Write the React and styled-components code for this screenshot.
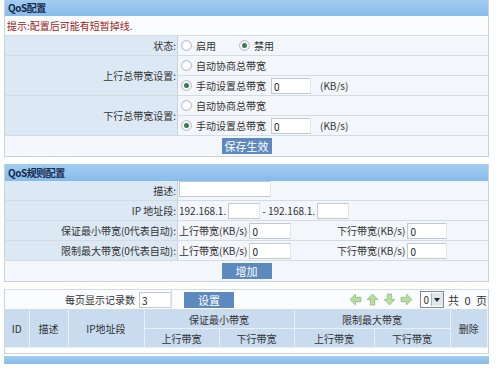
import React from "react";
import styled, { createGlobalStyle } from "styled-components";

const Global = createGlobalStyle`
	body {
		margin: 0;
		background: #ffffff;
		font-family: "Noto Sans CJK SC", "Liberation Sans", sans-serif;
		font-size: 10px;
		color: #333;
	}
`;

const Page = styled.div`
	width: 485px;
	padding: 0 11px 0 4px;
	display: flex;
	flex-direction: column;
`;

// panel with title bar
const Panel = styled.div`
	border: 1px solid #c9d3dd;
	border-top: none;
	background: #fff;
	margin-bottom: ${(p) => p.gap || 0}px;
`;

const TitleBar = styled.div`
	height: ${(p) => p.h || 16}px;
	line-height: ${(p) => p.h || 16}px;
	background: linear-gradient(#a3cdf0, #86bbea);
	padding-left: 3px;
	font-weight: bold;
	font-size: 10px;
	color: #14284a;
	letter-spacing: -0.5px;
`;

const Hint = styled.div`
	height: 19px;
	line-height: 19px;
	padding-left: 2px;
	color: #9b1c22;
	border-bottom: 1px solid #d3dbe3;
	background: #fbfcfe;
`;

const Table = styled.table`
	width: 100%;
	border-collapse: collapse;
	table-layout: fixed;
	td {
		padding: 0;
		height: 19px;
		border-bottom: 1px solid #d3dbe3;
		white-space: nowrap;
	}
`;

const Label = styled.td`
	width: 171px;
	background: #dce8f4;
	text-align: right;
	padding-right: 1px !important;
	border-right: 1px solid #c9d3dd;
`;

const Value = styled.td`
	background: #f3f6fa;
	padding-left: 1px !important;
`;

const Center = styled.td`
	background: #f3f6fa;
	text-align: center;
	height: 20px !important;
	border-bottom: none !important;
`;

const Inline = styled.div`
	display: flex;
	align-items: center;
	gap: ${(p) => p.gap || 4}px;
`;

const RadioDot = styled.span`
	width: 9px;
	height: 9px;
	border-radius: 50%;
	border: 1px solid #b8bec6;
	background: radial-gradient(circle, #fff 30%, #e4e8ec 100%);
	position: relative;
	margin: 0 4px 0 2px;
	&::after {
		content: "";
		display: ${(p) => (p.on ? "block" : "none")};
		position: absolute;
		left: 2px;
		top: 2px;
		width: 5px;
		height: 5px;
		border-radius: 50%;
		background: #3f7a52;
	}
`;

const RadioItem = styled.span`
	display: inline-flex;
	align-items: center;
	margin-right: ${(p) => p.mr || 0}px;
`;

const Field = styled.span`
	display: inline-block;
	width: ${(p) => p.w}px;
	height: 16px;
	line-height: 16px;
	border: 1px solid #c3c8ce;
	border-right-color: #e4e7ea;
	background: #fff;
	padding-left: 2px;
	box-sizing: border-box;
	font-size: 10px;
	color: #222;
`;

const Button = styled.span`
	display: inline-block;
	width: ${(p) => p.w || 50}px;
	height: 16px;
	line-height: 16px;
	background: #5d89bf;
	color: #fff;
	text-align: center;
	font-size: 11px;
`;

const Radio = ({ on, children, mr }) => (
	<RadioItem mr={mr}>
		<RadioDot on={on ? 1 : 0} />
		{children}
	</RadioItem>
);

const Half = styled.span`
	display: inline-flex;
	align-items: center;
	width: ${(p) => p.w}px;
	gap: 2px;
`;

// pager row
const PagerRow = styled.div`
	display: flex;
	align-items: center;
	height: 19px;
	border-top: 1px solid #d3dbe3;
	border-bottom: 1px solid #d3dbe3;
	background: #fbfcfe;
`;

const PagerLeft = styled.div`
	width: 166px;
	display: flex;
	align-items: center;
	justify-content: flex-end;
	gap: 4px;
	border-right: 1px solid #d3dbe3;
	height: 100%;
`;

const PagerBtnCell = styled.div`
	padding-left: 12px;
	display: flex;
	align-items: center;
`;

const PagerRight = styled.div`
	margin-left: auto;
	display: flex;
	align-items: center;
	gap: 4px;
	padding-right: 1px;
	font-size: 11px;
	word-spacing: 3px;
`;

const Arrows = styled.span`
	display: inline-flex;
	align-items: center;
	gap: 4px;
	margin-right: 3px;
`;

const Select = styled.span`
	display: inline-flex;
	align-items: center;
	height: 15px;
	border: 1px solid #7f8a96;
	background: #fff;
	font-size: 10px;
	span:first-child {
		padding: 0 2px;
	}
`;

const SelBtn = styled.span`
	width: 11px;
	height: 13px;
	background: #dfe6ee;
	border-left: 1px solid #aab4be;
	display: flex;
	align-items: center;
	justify-content: center;
	&::after {
		content: "";
		border: 3px solid transparent;
		border-top: 4px solid #222;
		margin-top: 3px;
	}
`;

const Head = styled.table`
	width: 100%;
	border-collapse: collapse;
	table-layout: fixed;
	th {
		font-weight: normal;
		background: #c8dbef;
		border: 1px solid #e8f0f8;
		border-top: none;
		height: 18px;
		padding: 0;
		color: #333;
	}
	tr:first-child th:first-child {
		border-left: none;
	}
`;

const Spacer = styled.div`
	height: 5px;
	background: #fff;
`;

const BottomBar = styled.div`
	height: 8px;
	background: linear-gradient(#a3cdf0, #86bbea);
	margin-top: 2px;
`;

const Arrow = ({ dir }) => {
	const rot = { left: 180, up: -90, down: 90, right: 0 }[dir];
	return (
		<svg width="13" height="13" viewBox="0 0 12 12">
			<g transform={`rotate(${rot} 6 6)`}>
				<path
					d="M1 4 H6 V1 L11 6 L6 11 V8 H1 Z"
					fill="#b9dca6"
					stroke="#8fbf7d"
					strokeWidth="0.8"
				/>
			</g>
		</svg>
	);
};

const Manual = () => (
	<Inline gap={0}>
		<Radio on>手动设置总带宽</Radio>
		<Field w={40} style={{ marginLeft: 1 }}>
			0
		</Field>
		<span style={{ marginLeft: 5 }}>(KB/s)</span>
	</Inline>
);

const Bandwidth = () => (
	<Inline gap={0}>
		<Half w={154}>
			上行带宽(KB/s)
			<Field w={42}>0</Field>
		</Half>
		<Half w={120}>
			下行带宽(KB/s)
			<Field w={40}>0</Field>
		</Half>
	</Inline>
);

export default function App() {
	return (
		<Page>
			<Global />
			<Panel gap={7}>
				<TitleBar>QoS配置</TitleBar>
				<Hint>提示:配置后可能有短暂掉线.</Hint>
				<Table>
					<tbody>
						<tr>
							<Label>状态:</Label>
							<Value>
								<Inline gap={0}>
									<Radio mr={17}>启用</Radio>
									<Radio on>禁用</Radio>
								</Inline>
							</Value>
						</tr>
						<tr>
							<Label rowSpan={2}>上行总带宽设置:</Label>
							<Value>
								<Radio>自动协商总带宽</Radio>
							</Value>
						</tr>
						<tr>
							<Value>
								<Manual />
							</Value>
						</tr>
						<tr>
							<Label rowSpan={2}>下行总带宽设置:</Label>
							<Value>
								<Radio>自动协商总带宽</Radio>
							</Value>
						</tr>
						<tr>
							<Value>
								<Manual />
							</Value>
						</tr>
						<tr>
							<Center colSpan={2}>
								<Button>保存生效</Button>
							</Center>
						</tr>
					</tbody>
				</Table>
			</Panel>

			<Panel gap={7}>
				<TitleBar h={17}>QoS规则配置</TitleBar>
				<Table>
					<tbody>
						<tr>
							<Label>描述:</Label>
							<Value>
								<Field w={92} />
							</Value>
						</tr>
						<tr>
							<Label>IP 地址段:</Label>
							<Value>
								<Inline gap={2}>
									<span>192.168.1.</span>
									<Field w={32} />
									<span>- 192.168.1.</span>
									<Field w={32} />
								</Inline>
							</Value>
						</tr>
						<tr>
							<Label>保证最小带宽(0代表自动):</Label>
							<Value>
								<Bandwidth />
							</Value>
						</tr>
						<tr>
							<Label>限制最大带宽(0代表自动):</Label>
							<Value>
								<Bandwidth />
							</Value>
						</tr>
						<tr>
							<Center colSpan={2}>
								<Button>增加</Button>
							</Center>
						</tr>
					</tbody>
				</Table>
			</Panel>

			<Panel>
				<PagerRow>
					<PagerLeft>
						每页显示记录数
						<Field w={32}>3</Field>
					</PagerLeft>
					<PagerBtnCell>
						<Button>设置</Button>
					</PagerBtnCell>
					<PagerRight>
						<Arrows>
							<Arrow dir="left" />
							<Arrow dir="up" />
							<Arrow dir="down" />
							<Arrow dir="right" />
						</Arrows>
						<Select>
							<span>0</span>
							<SelBtn />
						</Select>
						<span>共 0 页</span>
					</PagerRight>
				</PagerRow>
				<Head>
					<colgroup>
						<col style={{ width: 24 }} />
						<col style={{ width: 39 }} />
						<col style={{ width: 76 }} />
						<col style={{ width: 75 }} />
						<col style={{ width: 75 }} />
						<col style={{ width: 80 }} />
						<col style={{ width: 76 }} />
						<col />
					</colgroup>
					<thead>
						<tr>
							<th rowSpan={2}>ID</th>
							<th rowSpan={2}>描述</th>
							<th rowSpan={2}>IP地址段</th>
							<th colSpan={2}>保证最小带宽</th>
							<th colSpan={2}>限制最大带宽</th>
							<th rowSpan={2}>删除</th>
						</tr>
						<tr>
							<th>上行带宽</th>
							<th>下行带宽</th>
							<th>上行带宽</th>
							<th>下行带宽</th>
						</tr>
					</thead>
				</Head>
				<Spacer />
			</Panel>
			<BottomBar />
		</Page>
	);
}
